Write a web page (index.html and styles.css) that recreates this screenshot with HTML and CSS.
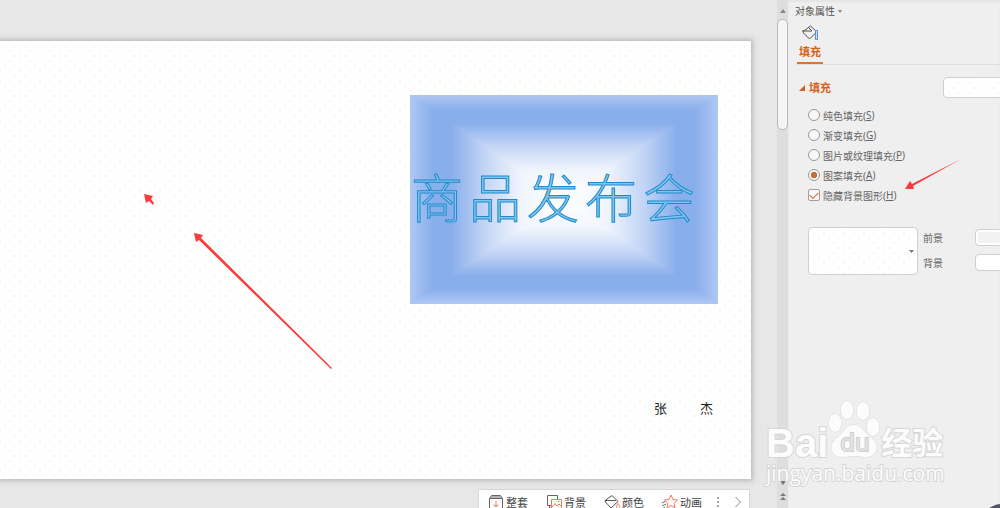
FILE: index.html
```html
<!DOCTYPE html>
<html lang="zh-CN">
<head>
    <meta charset="UTF-8">
    <meta name="viewport" content="width=device-width, initial-scale=1.0">
    <title>对象属性</title>
    <link rel="stylesheet" href="styles.css">
</head>
<body>
    <main class="canvas">
        <section class="slide dots">
            <div class="banner">
                <svg class="banner-bg" viewBox="0 0 308 209" preserveAspectRatio="none" aria-hidden="true">
                    <defs>
                        <linearGradient id="stops">
                            <stop offset="0" stop-color="#afc8f4"/>
                            <stop offset=".15" stop-color="#89aeec"/>
                            <stop offset=".27" stop-color="#89aeec"/>
                            <stop offset=".48" stop-color="#c1d4f5"/>
                            <stop offset=".72" stop-color="#f0f5fd"/>
                            <stop offset="1" stop-color="#ffffff"/>
                        </linearGradient>
                        <linearGradient id="gl" href="#stops" gradientUnits="userSpaceOnUse" x1="0" y1="0" x2="154" y2="0"/>
                        <linearGradient id="gr" href="#stops" gradientUnits="userSpaceOnUse" x1="308" y1="0" x2="154" y2="0"/>
                        <linearGradient id="gt" href="#stops" gradientUnits="userSpaceOnUse" x1="0" y1="0" x2="0" y2="104.5"/>
                        <linearGradient id="gb" href="#stops" gradientUnits="userSpaceOnUse" x1="0" y1="209" x2="0" y2="104.5"/>
                    </defs>
                    <rect width="308" height="209" fill="url(#gl)"/>
                    <path d="M308 0V209H154V0Z" fill="url(#gr)"/>
                    <path d="M0 0H308L154 104.5Z" fill="url(#gt)"/>
                    <path d="M0 209H308L154 104.5Z" fill="url(#gb)"/>
                </svg>
                <h1 class="banner-title"><span>商</span><span>品</span><span>发</span><span>布</span><span>会</span></h1>
            </div>
            <p class="author"><span>张</span><span>杰</span></p>
        </section>
        <nav class="toolbar">
            <button class="tool" type="button">
                <svg width="16" height="16" viewBox="0 0 16 16" fill="none" stroke="#666"><path d="M1.500 4.500L3.500 1.500H12.500L14.500 4.500V15.500H1.500ZM1.500 4.500H14.500M3 3H13"/><path d="M8 7V13M5.500 10.500L8 13L10.500 10.500" stroke="#f4775c"/></svg>
                整套
            </button>
            <button class="tool" type="button">
                <svg width="16" height="16" viewBox="0 0 16 16" fill="none" stroke="#666"><path d="M5 11.500H1.500V1.500H11.500V5M3.500 11.500V14H5"/><path d="M5.500 5.500H15.500V14.500H5.500ZM6 13L9 9.500L11 12L13 10L15 12M12 7.500H13.500" stroke="#f4775c"/></svg>
                背景
            </button>
            <button class="tool" type="button">
                <svg width="16" height="16" viewBox="0 0 16 16" fill="none" stroke="#555"><path d="M1 6.500L8 1.500L14 7.500L7 14L1.500 8ZM1 6.500H12"/><path d="M14 9.500C12 12 12 14.500 14 14.500S16 12 14 9.500Z" stroke="#f4775c"/></svg>
                颜色
            </button>
            <button class="tool" type="button">
                <svg width="16" height="16" viewBox="0 0 16 16" fill="none" stroke="#f4775c"><path d="M9 1L11 5.500L15.500 6L12.200 9.200L13 14L9 11.500L5 14L5.800 9.200L2.500 6L7 5.500Z"/><path d="M0 9L3 7.500M0 12L4 10M0 15L3 13" stroke="#666"/></svg>
                动画
            </button>
            <button class="tool more" type="button" aria-label="更多">
                <svg width="4" height="14" viewBox="0 0 4 14" fill="#888"><circle cx="2" cy="3" r="1"/><circle cx="2" cy="7" r="1"/><circle cx="2" cy="11" r="1"/></svg>
            </button>
            <button class="tool next" type="button" aria-label="下一个">
                <svg width="8" height="12" viewBox="0 0 8 12" fill="none" stroke="#888"><path d="M1.500 1L6.500 6L1.500 11"/></svg>
            </button>
        </nav>
    </main>

    <div class="scrollbar" aria-hidden="true">
        <svg width="6" height="4" viewBox="0 0 6 4" fill="#888"><path d="M0 4L3 0L6 4Z"/></svg>
        <div class="thumb"></div>
        <svg class="down" width="6" height="4" viewBox="0 0 6 4" fill="#777"><path d="M0 0H6L3 4Z"/></svg>
        <svg width="6" height="8" viewBox="0 0 6 8" fill="#777"><path d="M0 3L3 0L6 3ZM0 7L3 4L6 7Z"/></svg>
    </div>

    <aside class="panel">
        <h2 class="panel-title">对象属性 <svg width="4" height="3" viewBox="0 0 4 3" fill="#888"><path d="M0 0H4L2 3Z"/></svg></h2>
        <div class="tabs">
            <button class="tab" type="button">
                <svg width="18" height="18" viewBox="0 0 18 18" fill="none" stroke="#555"><path d="M2 7.500L9.500 2L14.500 6.500V9L8.500 15L2.500 9ZM1 7H11M7 3L11 7"/><path d="M14.500 6.500H16.500V15.500H14.500Z" fill="#c9dcfa" stroke="#5b8fe0"/></svg>
                <span>填充</span>
            </button>
        </div>
        <div class="section-head">
            <h3><svg width="6" height="6" viewBox="0 0 6 6" fill="#d8611a"><path d="M6 0V6H0Z"/></svg>填充</h3>
            <select class="box fill-select dots" aria-label="填充"></select>
        </div>
        <form class="options">
            <label><input type="radio" name="fill">纯色填充(<u>S</u>)</label>
            <label><input type="radio" name="fill">渐变填充(<u>G</u>)</label>
            <label><input type="radio" name="fill">图片或纹理填充(<u>P</u>)</label>
            <label><input type="radio" name="fill" checked>图案填充(<u>A</u>)</label>
            <label><input type="checkbox" checked>隐藏背景图形(<u>H</u>)</label>
        </form>
        <div class="pattern">
            <div class="pattern-box">
                <select class="box pattern-select dots" aria-label="图案"></select>
                <svg class="caret" width="5" height="3" viewBox="0 0 5 3" fill="#777"><path d="M0 0H5L2.500 3Z"/></svg>
            </div>
            <div class="colors">
                <div class="color-row"><label for="fore">前景</label><select id="fore" class="box color fore"></select></div>
                <div class="color-row"><label for="back">背景</label><select id="back" class="box color"></select></div>
            </div>
        </div>
    </aside>

    <!-- red marker arrows -->
    <svg class="arrow arrow-small" viewBox="0 0 10 11" fill="#fb3b3b"><path d="M0 0L9 2L7 5L10 9L9 11L5 7L2 9Z"/></svg>
    <svg class="arrow arrow-long" viewBox="0 0 138 136" fill="#fb3b3b"><path d="M0 0L9 2L7 5L138 135L137 136L5 7L2 9Z"/></svg>
    <svg class="arrow arrow-panel" viewBox="0 0 56 31" fill="#fb3b3b"><path d="M0 30L5 22L7 25L56 0L8 27L9 30Z"/></svg>

    <div class="watermark">
        <div class="mark-row">
            <span class="mark-bai">Bai</span>
            <span class="paw">
                <svg viewBox="0 0 54 58" fill="#fcfcfc" stroke="#d6d6d6"><ellipse cx="7" cy="23" rx="6.500" ry="9"/><ellipse cx="19" cy="10" rx="6.500" ry="9"/><ellipse cx="35" cy="11" rx="6.500" ry="9"/><ellipse cx="45" cy="27" rx="6.500" ry="9"/><path d="M26 25C17 25 16 33 9 38C0 44 2 57 14 57C19 57 21 56 26 56S33 57 38 57C50 57 52 44 43 38C36 33 35 25 26 25Z"/></svg>
                <span class="du">du</span>
            </span>
            <span class="mark-cn">经验</span>
        </div>
        <div class="mark-url">jingyan.baidu.com</div>
    </div>
    <div class="corner" aria-hidden="true"></div>
</body>
</html>
```
FILE: styles.css
```css
* {
    box-sizing: border-box;
}

body {
    margin: 0;
    height: 100vh;
    display: flex;
    overflow: hidden;
    position: relative;
    background-color: #e7e7e7;
    color: #666;
    font-family: "Noto Sans", "Noto Sans CJK SC", sans-serif;
    font-size: 10px;
}

h1, h2, h3, p {
    margin: 0;
}

button, select {
    font-family: inherit;
    color: inherit;
    margin: 0;
}

.dots {
    background-color: #fff;
    background-image: radial-gradient(circle, #f8f8f8 1px, transparent 1px), radial-gradient(circle, #f8f8f8 1px, transparent 1px);
    background-size: 10px 10px;
    background-position: 0 0, 5px 5px;
}

/* slide area */
.canvas {
    flex: 1;
    min-width: 0;
    display: flex;
    flex-direction: column;
    gap: 10px;
    padding: 41px 26px 0 0;
}

.slide {
    flex: 1;
    display: flex;
    flex-direction: column;
    align-items: flex-end;
    justify-content: space-between;
    padding: 54px 33px 61px;
    box-shadow: 0 0 5px 2px #bbb;
}

.banner {
    width: 308px;
    height: 209px;
    display: grid;
}

.banner-bg, .banner-title {
    grid-area: 1 / 1;
}

.banner-bg {
    width: 100%;
    height: 100%;
}

.banner-title {
    display: flex;
    gap: 6px;
    align-self: center;
    padding: 0 0 8px 1px;
    font-family: "Noto Sans CJK SC", sans-serif;
    font-size: 52px;
    font-weight: 300;
    line-height: 60px;
    color: #7cc6ec;
    -webkit-text-stroke: 1px #2389cd;
}

.author {
    display: flex;
    gap: 33px;
    padding-right: 5px;
    font-size: 13px;
    line-height: 20px;
    color: #222;
}

.toolbar {
    align-self: flex-end;
    width: 272px;
    height: 28px;
    margin: 0 1px -9px 0;
    display: flex;
    align-items: center;
    gap: 18px;
    padding: 0 9px 2px;
    background-color: #fff;
    border: 1px solid #d6d6d6;
}

.tool {
    display: flex;
    align-items: center;
    gap: 2px;
    padding: 0;
    border: none;
    background: none;
    font-size: 11px;
    white-space: nowrap;
    color: #444;
}

.tool.more,
.tool.next {
    margin-left: -4px;
}

/* scrollbar */
.scrollbar {
    width: 11px;
    display: flex;
    flex-direction: column;
    align-items: center;
    padding: 9px 0 7px;
    background-color: #dedede;
}

.thumb {
    width: 11px;
    height: 111px;
    margin-top: 6px;
    border: 1px solid #b8b8b8;
    border-radius: 5px;
    background-color: #f5f5f5;
}

.down {
    margin-top: auto;
    margin-bottom: 8px;
}

/* property panel */
.panel {
    width: 212px;
    overflow: hidden;
    background-color: #efefef;
    box-shadow: inset 0 2px 2px #e4e4e4;
}

.panel-title {
    display: flex;
    align-items: center;
    gap: 3px;
    padding: 3px 0 0 7px;
    font-size: 10px;
    font-weight: 400;
    line-height: 16px;
    color: #505050;
}

.tabs {
    display: flex;
    margin: 5px 0 0 9px;
    border-bottom: 1px solid #e0e0e0;
}

.tab {
    width: 26px;
    display: flex;
    flex-direction: column;
    align-items: center;
    padding: 0;
    border: none;
    border-bottom: 2px solid #dd7235;
    background: none;
    font-size: 11px;
    font-weight: 700;
    line-height: 20px;
    color: #d8611a;
}

.section-head {
    display: flex;
    align-items: center;
    justify-content: space-between;
    margin-top: 12px;
    padding-left: 11px;
}

.section-head h3 {
    display: flex;
    align-items: center;
    gap: 4px;
    font-size: 11px;
    line-height: 20px;
    color: #d8611a;
}

.box {
    appearance: none;
    padding: 0;
    border: 1px solid #cfcfcf;
    border-radius: 4px;
    background-color: #fff;
}

.fill-select {
    width: 64px;
    height: 21px;
    margin-right: -7px;
}

.options {
    padding: 7px 0 0 20px;
}

.options label {
    display: flex;
    align-items: center;
    height: 20px;
}

.options input {
    appearance: none;
    width: 12px;
    height: 12px;
    margin: 0 3px 0 0;
    border: 1px solid #999;
    background-color: #f8f8f8;
}

.options input[type="radio"] {
    border-radius: 50%;
}

.options input[type="radio"]:checked {
    background-image: radial-gradient(circle, #c56f3d 3px, transparent 3px);
}

.options input[type="checkbox"] {
    display: grid;
    place-items: center;
    border-radius: 2px;
    border-color: #b09a8e;
}

.options input[type="checkbox"]:checked::before {
    content: "";
    width: 7px;
    height: 4px;
    margin-bottom: 2px;
    border-left: 1px solid #c0632d;
    border-bottom: 1px solid #c0632d;
    transform: rotate(-45deg);
}

.pattern {
    display: flex;
    gap: 5px;
    margin-top: 22px;
    padding-left: 20px;
}

.pattern-box {
    position: relative;
}

.pattern-select {
    display: block;
    width: 110px;
    height: 48px;
}

.caret {
    position: absolute;
    right: 4px;
    top: 23px;
}

.colors {
    flex: 1;
    display: flex;
    flex-direction: column;
    gap: 5px;
}

.color-row {
    display: flex;
    align-items: center;
    justify-content: space-between;
    height: 20px;
    margin-right: -5px;
}

.color {
    width: 30px;
    height: 17px;
}

.fore {
    background-color: #f2f2f2;
    box-shadow: inset 0 0 0 2px #fff;
}

/* marker arrows */
.arrow {
    position: absolute;
}

.arrow-small {
    left: 144px;
    top: 194px;
    width: 10px;
    height: 11px;
}

.arrow-long {
    left: 194px;
    top: 233px;
    width: 138px;
    height: 136px;
}

.arrow-panel {
    left: 905px;
    top: 159px;
    width: 56px;
    height: 31px;
}

/* watermark */
.watermark {
    position: absolute;
    left: 766px;
    top: 400px;
    color: #fcfcfc;
    paint-order: stroke fill;
    -webkit-text-stroke: 2px #d6d6d6;
}

.mark-row {
    display: flex;
    align-items: flex-end;
    height: 58px;
}

.mark-bai {
    font-family: "Liberation Sans", sans-serif;
    font-size: 40px;
    font-weight: 700;
    line-height: 30px;
}

.paw {
    position: relative;
    width: 53px;
    height: 58px;
}

.paw svg {
    width: 54px;
    height: 58px;
}

.du {
    position: absolute;
    left: 12px;
    top: 29px;
    font-family: "Open Sans", sans-serif;
    font-size: 24px;
    line-height: 26px;
    color: #e4e4e4;
    -webkit-text-stroke: 2px #cdcdcd;
}

.mark-cn {
    font-family: "Noto Sans CJK SC", sans-serif;
    font-size: 31px;
    font-weight: 700;
    line-height: 34px;
}

.mark-url {
    margin-top: 1px;
    font-family: "Open Sans", sans-serif;
    font-size: 21px;
    line-height: 28px;
}

.corner {
    position: absolute;
    left: 980px;
    top: 504px;
    width: 44px;
    height: 44px;
    border-radius: 50%;
    background-color: #555763;
}
```
